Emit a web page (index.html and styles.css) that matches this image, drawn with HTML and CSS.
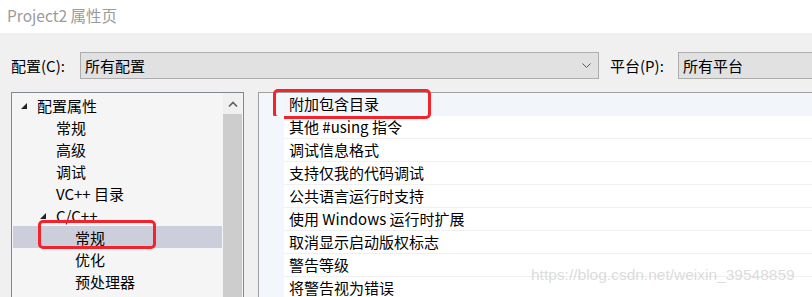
FILE: index.html
```html
<!DOCTYPE html>
<html lang="zh-CN">
<head>
    <meta charset="UTF-8">
    <meta name="viewport" content="width=device-width, initial-scale=1.0">
    <title>Project2 属性页</title>
    <link rel="stylesheet" href="styles.css">
</head>
<body>
    <div class="window">
        <div class="titlebar">Project2 属性页</div>
        <div class="dialog">
            <div class="config-row">
                <label class="field-label">配置(C):</label>
                <div class="combo combo-config">
                    <span class="combo-text">所有配置</span>
                    <svg class="chevron" width="9" height="6" viewBox="0 0 9 6"><polyline points="0.5,0.5 4.5,4.5 8.5,0.5" fill="none" stroke="#555" stroke-width="1"/></svg>
                </div>
                <label class="field-label platform-label">平台(P):</label>
                <div class="combo combo-platform">
                    <span class="combo-text">所有平台</span>
                </div>
            </div>

            <div class="panels">
                <div class="tree-panel">
                    <ul class="tree">
                        <li class="node level0"><svg class="twisty" width="6" height="6" viewBox="0 0 6 6"><polygon points="6,0 6,6 0,6" fill="#222"/></svg>配置属性</li>
                        <li class="node level1">常规</li>
                        <li class="node level1">高级</li>
                        <li class="node level1">调试</li>
                        <li class="node level1">VC++ 目录</li>
                        <li class="node level1 parent"><svg class="twisty" width="6" height="6" viewBox="0 0 6 6"><polygon points="6,0 6,6 0,6" fill="#222"/></svg>C/C++</li>
                        <li class="node level2 selected">常规<span class="mark mark-tree"></span></li>
                        <li class="node level2">优化</li>
                        <li class="node level2">预处理器</li>
                    </ul>
                    <div class="scrollbar">
                        <div class="scroll-up">
                            <svg width="10" height="6" viewBox="0 0 10 6"><polyline points="1,5.5 5,1.5 9,5.5" fill="none" stroke="#606060" stroke-width="1.6"/></svg>
                        </div>
                        <div class="scroll-thumb"></div>
                    </div>
                </div>

                <div class="prop-panel">
                    <div class="prop-row current"><div class="gutter"></div><div class="prop-name">附加包含目录</div><span class="mark mark-prop"></span></div>
                    <div class="prop-row"><div class="gutter"></div><div class="prop-name">其他 #using 指令</div></div>
                    <div class="prop-row"><div class="gutter"></div><div class="prop-name">调试信息格式</div></div>
                    <div class="prop-row"><div class="gutter"></div><div class="prop-name">支持仅我的代码调试</div></div>
                    <div class="prop-row"><div class="gutter"></div><div class="prop-name">公共语言运行时支持</div></div>
                    <div class="prop-row"><div class="gutter"></div><div class="prop-name">使用 Windows 运行时扩展</div></div>
                    <div class="prop-row"><div class="gutter"></div><div class="prop-name">取消显示启动版权标志</div></div>
                    <div class="prop-row"><div class="gutter"></div><div class="prop-name">警告等级</div></div>
                    <div class="prop-row"><div class="gutter"></div><div class="prop-name">将警告视为错误</div></div>
                </div>
            </div>
        </div>
        <div class="watermark">https://blog.csdn.net/weixin_39548859</div>
    </div>
</body>
</html>
```

FILE: styles.css
```css
body {
    margin: 0;
    font-family: "Noto Sans CJK SC", "Noto Sans", sans-serif;
    font-size: 15px;
    color: #000;
    background-color: #f0f0f0;
}
.window {
    position: relative;
    width: 812px;
    height: 297px;
    overflow: hidden;
    background-color: #f0f0f0;
}
.titlebar {
    height: 33px;
    line-height: 30px;
    padding-left: 7px;
    background-color: #fff;
    color: #9b9b9b;
    font-size: 15.5px;
}
.dialog {
    padding: 19px 0 0 11px;
}
.config-row {
    display: flex;
    align-items: center;
    height: 27px;
}
.field-label {
    width: 69px;
    flex-shrink: 0;
    line-height: 27px;
}
.platform-label {
    width: 68px;
    margin-left: 11px;
}
.combo {
    display: flex;
    align-items: center;
    justify-content: space-between;
    box-sizing: border-box;
    height: 27px;
    padding: 0 7px 0 4px;
    background-color: #e1e1e1;
    border: 1px solid #adadad;
    flex-shrink: 0;
}
.combo-config { width: 519px; }
.combo-platform { width: 220px; }
.combo-text { line-height: 25px; }
.chevron { display: block; }
.panels {
    display: flex;
    margin-top: 13px;
    gap: 14px;
}
.tree-panel {
    display: flex;
    width: 233px;
    height: 220px;
    box-sizing: border-box;
    border: 1px solid #828790;
    background-color: #f5f5f5;
}
.tree {
    list-style: none;
    margin: 0;
    padding: 1px 0 0;
    width: 210px;
    flex-shrink: 0;
}
.node {
    position: relative;
    display: flex;
    align-items: center;
    height: 22px;
    white-space: nowrap;
}
.twisty {
    margin-right: 10px;
    margin-top: 2px;
}
.level0 { padding-left: 9px; }
.level1 { padding-left: 44px; }
.level1.parent { padding-left: 28px; }
.level2 { padding-left: 63px; }
.selected {
    margin-left: 1px;
    padding-left: 62px;
    background-color: #cccedb;
}
.scrollbar {
    width: 19px;
    margin-left: 1px;
    display: flex;
    flex-direction: column;
    background-color: #f0f0f0;
}
.scroll-up {
    height: 21px;
    display: flex;
    justify-content: center;
    align-items: center;
}
.scroll-thumb {
    flex: 1;
    background-color: #cdcdcd;
}
.prop-panel {
    flex: 1;
    border-top: 1px solid #a0a0a0;
    border-left: 1px solid #a0a0a0;
    background-color: #fff;
}
.prop-row {
    position: relative;
    display: flex;
    height: 23px;
}
.gutter {
    width: 25px;
    background-color: #f3f6fb;
}
.prop-name {
    flex: 1;
    padding-left: 5px;
    line-height: 22px;
    border-bottom: 1px solid #f0f0f0;
    white-space: nowrap;
}
.current .prop-name {
    background-color: #f2f5fa;
    border-bottom-color: #f2f5fa;
}
.mark {
    position: absolute;
    box-sizing: border-box;
    border: 3px solid #f5222a;
    border-radius: 5px;
}
.mark-tree {
    left: 25px;
    top: -6px;
    width: 118px;
    height: 29px;
}
.mark-prop {
    left: 14px;
    top: -4px;
    width: 158px;
    height: 30px;
}
.watermark {
    position: absolute;
    left: 531px;
    top: 266px;
    font-family: "Liberation Sans", Arial, sans-serif;
    font-size: 15.5px;
    color: rgba(190, 190, 190, 0.55);
    white-space: nowrap;
}
```
